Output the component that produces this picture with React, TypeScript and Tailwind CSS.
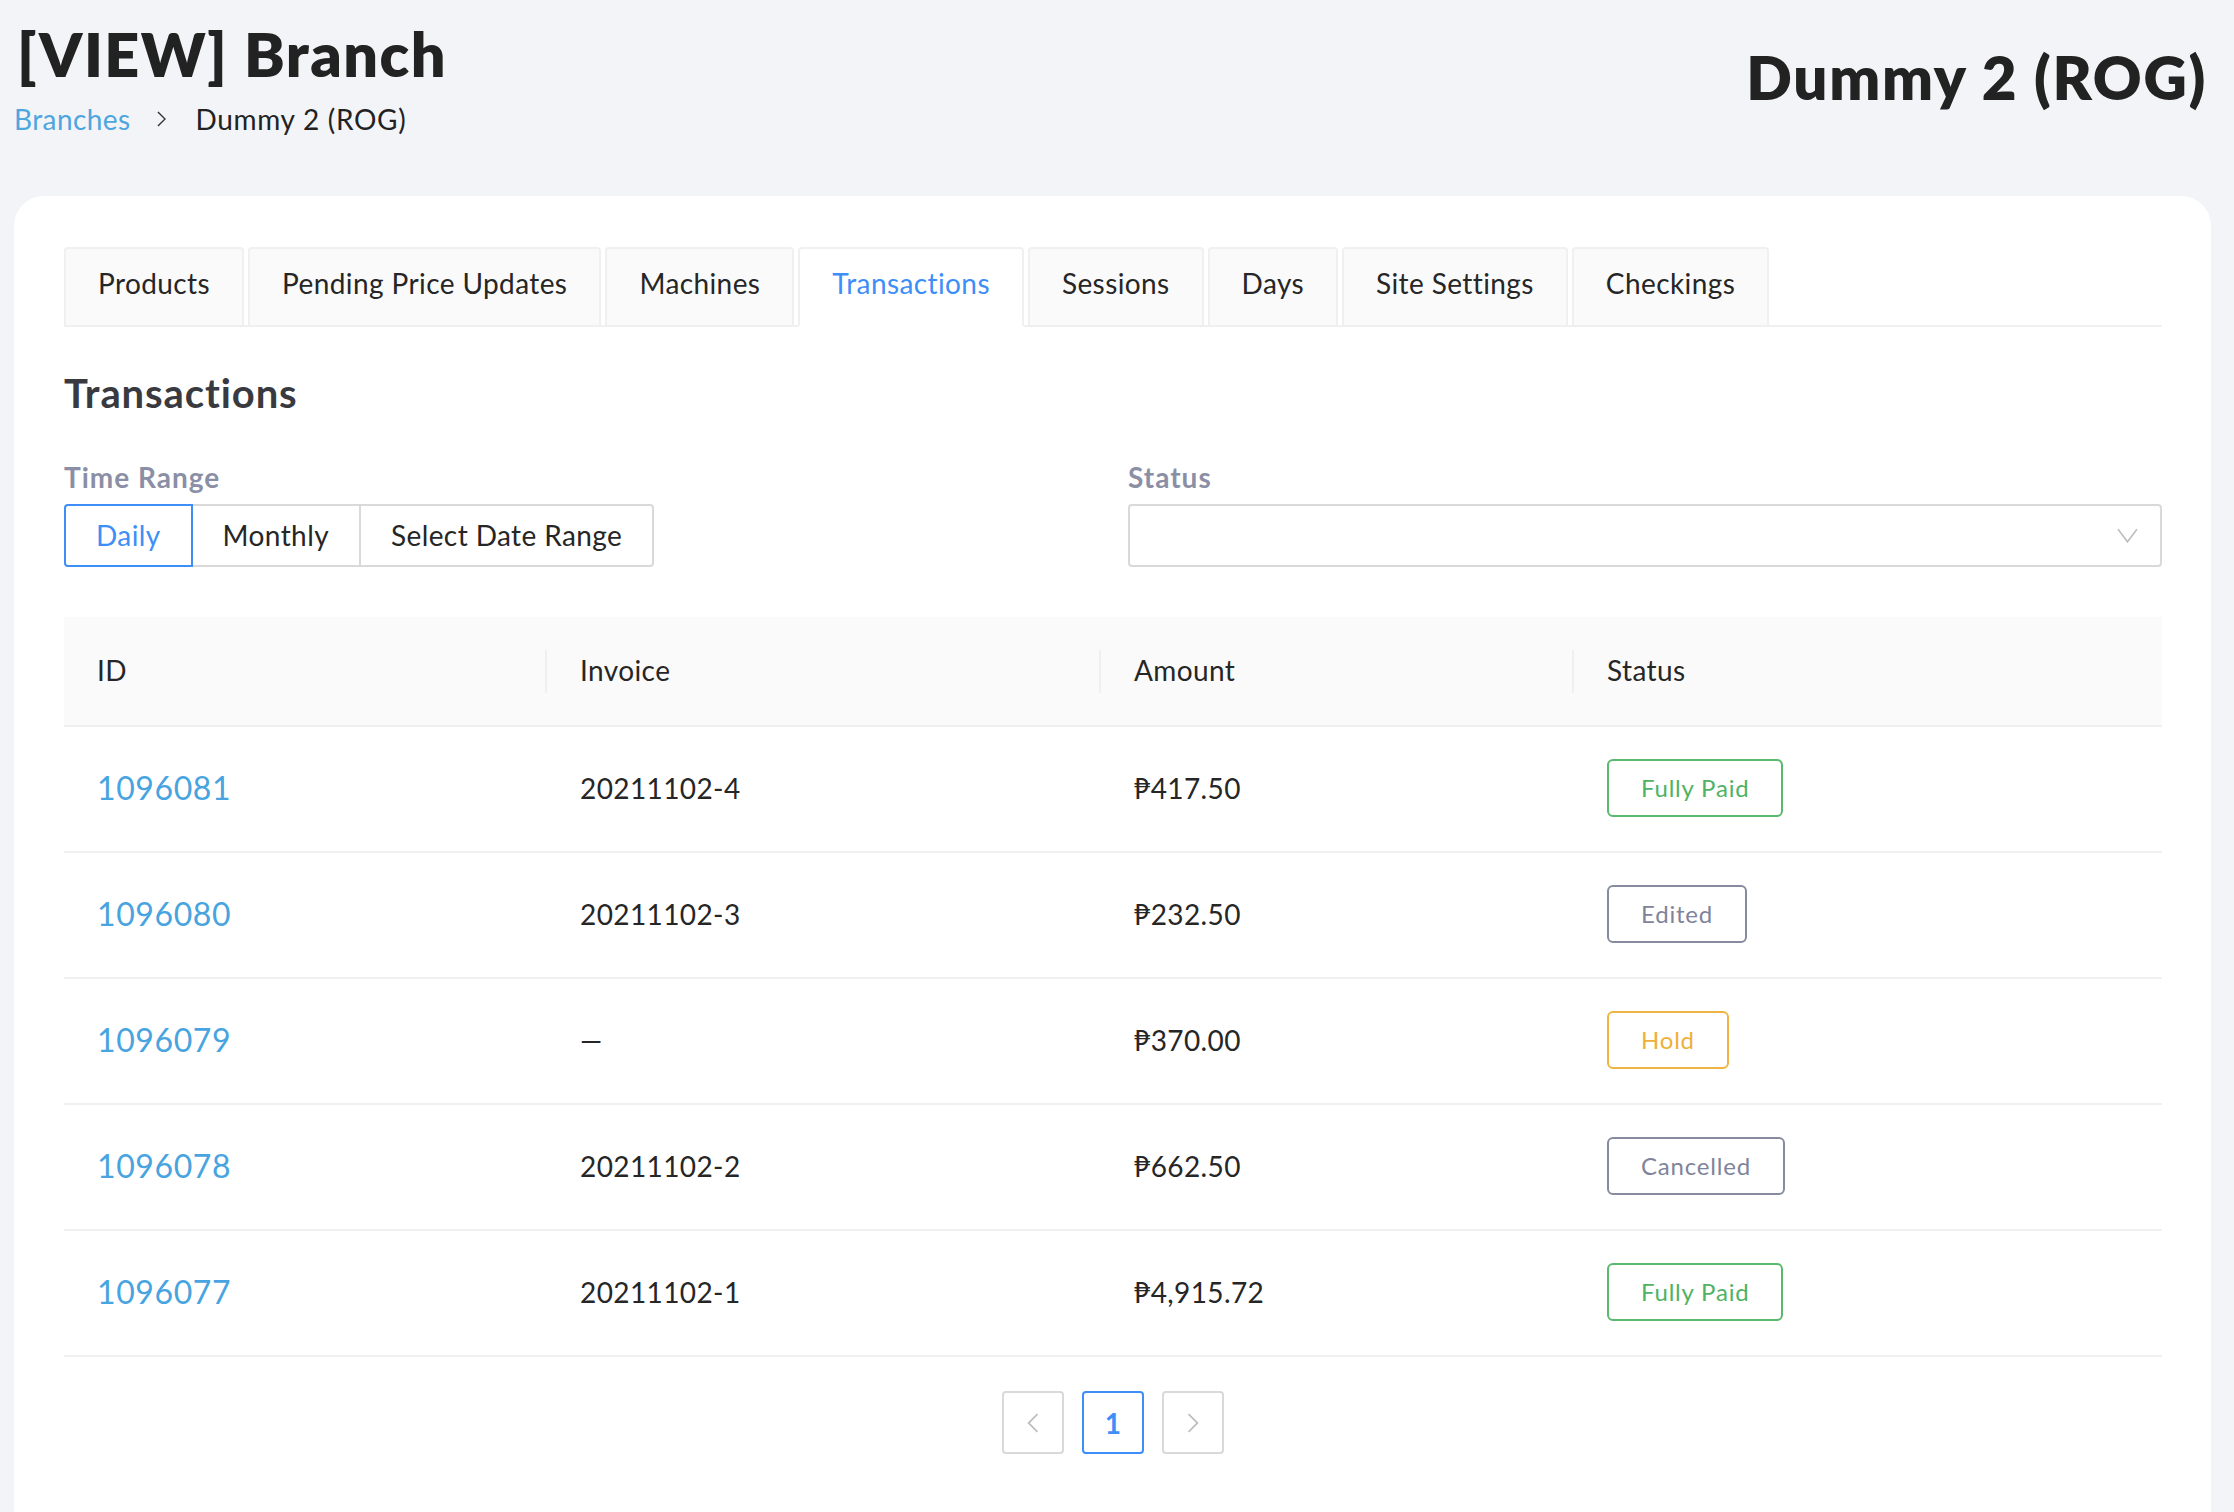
import { useState } from "react";

const tabs = [
  "Products",
  "Pending Price Updates",
  "Machines",
  "Transactions",
  "Sessions",
  "Days",
  "Site Settings",
  "Checkings",
];

type Status = "Fully Paid" | "Edited" | "Hold" | "Cancelled";

const rows: { id: string; invoice: string; amount: string; status: Status }[] = [
  { id: "1096081", invoice: "20211102-4", amount: "₱417.50", status: "Fully Paid" },
  { id: "1096080", invoice: "20211102-3", amount: "₱232.50", status: "Edited" },
  { id: "1096079", invoice: "—", amount: "₱370.00", status: "Hold" },
  { id: "1096078", invoice: "20211102-2", amount: "₱662.50", status: "Cancelled" },
  { id: "1096077", invoice: "20211102-1", amount: "₱4,915.72", status: "Fully Paid" },
];

const badgeStyles: Record<Status, string> = {
  "Fully Paid": "border-[#5bb96d] text-[#4fb362]",
  Edited: "border-[#878b9f] text-[#7f849a]",
  Hold: "border-[#f0b544] text-[#eeb038]",
  Cancelled: "border-[#878b9f] text-[#7f849a]",
};

const Chevron = ({ dir, className }: { dir: "left" | "right" | "down"; className?: string }) => {
  const points =
    dir === "left" ? "9,1 1,9 9,17" : dir === "right" ? "1,1 9,9 1,17" : "1,1 10,13 19,1";
  const box = dir === "down" ? "0 0 20 14" : "0 0 10 18";
  return (
    <svg viewBox={box} className={className} fill="none" stroke="currentColor" strokeWidth={1.6}>
      <polyline points={points} />
    </svg>
  );
};

const App = () => {
  const [activeTab, setActiveTab] = useState("Transactions");
  const [range, setRange] = useState("Daily");

  return (
    <div className="h-screen overflow-hidden bg-[#f3f4f8] flex flex-col font-['Lato','Noto_Sans','DejaVu_Sans',sans-serif] text-[#262626] tracking-[0.4px]">
      {/* page header */}
      <div className="flex justify-between items-start pl-[17px] pr-[27px] pt-[23px]">
        <div>
          <h1 className="text-[61px] font-extrabold leading-none tracking-[1.5px] text-[#222]">[VIEW] Branch</h1>
          <div className="mt-[21px] flex items-center text-[28px] leading-none">
            <a className="text-[#4ea6df] ml-[-3px]">Branches</a>
            <Chevron dir="right" className="w-[9px] h-[16px] ml-[27px] mr-[29px] text-[#333]" />
            <span className="text-[#222] tracking-[0.7px]">Dummy 2 (ROG)</span>
          </div>
        </div>
        <h2 className="mt-[24px] text-[60px] font-extrabold leading-none tracking-[1.7px] text-[#222]">Dummy 2 (ROG)</h2>
      </div>

      {/* card */}
      <div className="mt-[63px] ml-[14px] mr-[23px] flex-1 bg-white rounded-t-[30px] pr-[49px] pl-[50px] pt-[51px]">
        {/* tabs */}
        <div className="flex items-end gap-[4px] border-b-2 border-[#f0f0f0]">
          {tabs.map((t) => (
            <button
              key={t}
              onClick={() => setActiveTab(t)}
              className={`-mb-[2px] h-[80px] px-[32px] pb-[8px] border-2 rounded-t-[4px] text-[28px] leading-none ${
                t === activeTab
                  ? "bg-white border-[#f0f0f0] border-b-white text-[#3e8ef7]"
                  : "bg-[#fafafa] border-[#f0f0f0] text-[#262626]"
              }`}
            >
              {t}
            </button>
          ))}
        </div>

        <h3 className="mt-[46px] text-[40px] font-bold leading-none tracking-[0.9px] text-[#393a3f]">Transactions</h3>

        {/* filters */}
        <div className="mt-[50px] grid grid-cols-2 gap-x-[30px]">
          <div>
            <div className="text-[28px] font-bold leading-none tracking-[1px] text-[#8b8fa5]">Time Range</div>
            <div className="mt-[13px] flex">
              {["Daily", "Monthly", "Select Date Range"].map((r, i) => (
                <button
                  key={r}
                  onClick={() => setRange(r)}
                  className={`h-[63px] px-[30px] pb-[2px] border-2 text-[28px] leading-none ${i > 0 ? "-ml-[2px]" : ""} ${
                    i === 0 ? "rounded-l-[4px]" : ""
                  } ${i === 2 ? "rounded-r-[4px]" : ""} ${
                    range === r ? "relative z-10 border-[#3e8ef7] text-[#3e8ef7]" : "border-[#d9d9d9] text-[#262626]"
                  }`}
                >
                  {r}
                </button>
              ))}
            </div>
          </div>
          <div>
            <div className="text-[28px] font-bold leading-none tracking-[1px] text-[#8b8fa5]">Status</div>
            <div className="mt-[13px] h-[63px] border-2 border-[#d9d9d9] rounded-[4px] flex items-center justify-end pr-[22px]">
              <Chevron dir="down" className="w-[21px] h-[15px] text-[#bfbfbf]" />
            </div>
          </div>
        </div>

        {/* table */}
        <div className="mt-[50px]">
          <div className="grid grid-cols-[483px_554px_473px_1fr] h-[110px] items-center bg-[#fafafa] border-b-2 border-[#f0f0f0] text-[28px]">
            {["ID", "Invoice", "Amount", "Status"].map((h, i) => (
              <div key={h} className="relative pl-[33px] pb-[2px] flex items-center h-full">
                {h}
                {i < 3 && <span className="absolute right-0 top-[33px] h-[43px] w-[2px] bg-[#f0f0f0]" />}
              </div>
            ))}
          </div>
          {rows.map((r) => (
            <div
              key={r.id}
              className="grid grid-cols-[483px_554px_473px_1fr] h-[126px] pb-[2px] items-center border-b-2 border-[#f0f0f0] text-[28px]"
            >
              <a className="pl-[33px] text-[32px] tracking-[0.6px] text-[#48a4e0]">{r.id}</a>
              <div className="pl-[33px]">{r.invoice}</div>
              <div className="pl-[33px]">{r.amount}</div>
              <div className="pl-[33px]">
                <span
                  className={`inline-flex items-center h-[58px] px-[32px] border-2 rounded-[6px] text-[24px] tracking-[0.8px] ${badgeStyles[r.status]}`}
                >
                  {r.status}
                </span>
              </div>
            </div>
          ))}
        </div>

        {/* pagination */}
        <div className="mt-[34px] flex justify-center gap-[18px]">
          <button className="w-[62px] h-[63px] border-2 border-[#d9d9d9] rounded-[4px] flex items-center justify-center text-[#bfbfbf]">
            <Chevron dir="left" className="w-[12px] h-[20px]" />
          </button>
          <button className="w-[62px] h-[63px] border-2 border-[#3e8ef7] rounded-[4px] flex items-center justify-center text-[28px] font-bold text-[#3e8ef7]">
            1
          </button>
          <button className="w-[62px] h-[63px] border-2 border-[#d9d9d9] rounded-[4px] flex items-center justify-center text-[#bfbfbf]">
            <Chevron dir="right" className="w-[12px] h-[20px]" />
          </button>
        </div>
      </div>
    </div>
  );
};

export default App;
